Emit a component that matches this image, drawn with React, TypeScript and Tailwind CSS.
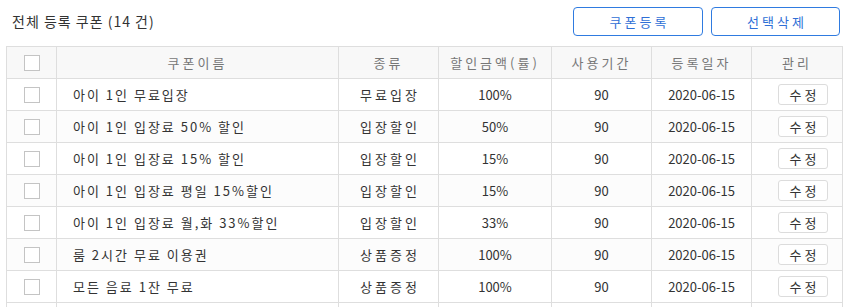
import React from 'react';

type Coupon = {
  name: string;
  kind: string;
  amount: string;
  days: number;
  date: string;
};

const coupons: Coupon[] = [
  { name: '아이 1인 무료입장', kind: '무료입장', amount: '100%', days: 90, date: '2020-06-15' },
  { name: '아이 1인 입장료 50% 할인', kind: '입장할인', amount: '50%', days: 90, date: '2020-06-15' },
  { name: '아이 1인 입장료 15% 할인', kind: '입장할인', amount: '15%', days: 90, date: '2020-06-15' },
  { name: '아이 1인 입장료 평일 15%할인', kind: '입장할인', amount: '15%', days: 90, date: '2020-06-15' },
  { name: '아이 1인 입장료 월,화 33%할인', kind: '입장할인', amount: '33%', days: 90, date: '2020-06-15' },
  { name: '룸 2시간 무료 이용권', kind: '상품증정', amount: '100%', days: 90, date: '2020-06-15' },
  { name: '모든 음료 1잔 무료', kind: '상품증정', amount: '100%', days: 90, date: '2020-06-15' },
];

function Checkbox() {
  return <span className="mx-auto block h-4 w-4 border border-[#c4c4c4] bg-white" />;
}

const th = 'h-8 border border-[#dedede] p-0 text-center font-normal text-[13px] tracking-[3px] text-[#777]';
const td = 'h-8 border border-[#dedede] p-0 text-center text-[13px] text-[#333]';

export default function App() {
  return (
    <div
      className="bg-white px-[6px]"
      style={{ fontFamily: '"Noto Sans CJK KR", "Noto Sans", sans-serif' }}
    >
      <div className="flex h-[43px] items-center justify-between">
        <h2 className="pl-[6px] text-[14px] font-normal tracking-[1px] text-[#333]">전체 등록 쿠폰 (14 건)</h2>
        <div className="mr-[2px] flex gap-[8px]">
          <button className="h-[29px] w-[130px] rounded-[4px] border border-[#2f7be0] bg-white pl-[3px] text-[13px] tracking-[3px] text-[#2f6fd6]">
            쿠폰등록
          </button>
          <button className="h-[29px] w-[129px] rounded-[4px] border border-[#2f7be0] bg-white pl-[3px] text-[13px] tracking-[3px] text-[#2f6fd6]">
            선택삭제
          </button>
        </div>
      </div>
      <table className="mt-[3px] w-[836px] table-fixed border-collapse">
        <colgroup>
          <col className="w-[50px]" />
          <col className="w-[282px]" />
          <col className="w-[100px]" />
          <col className="w-[113px]" />
          <col className="w-[100px]" />
          <col className="w-[100px]" />
          <col className="w-[91px]" />
        </colgroup>
        <thead>
          <tr className="bg-[#f8f8f8]">
            <th className={th}>
              <Checkbox />
            </th>
            <th className={th}>쿠폰이름</th>
            <th className={th}>종류</th>
            <th className={`${th} tracking-[1px]`}>할인금액(률)</th>
            <th className={th}>사용기간</th>
            <th className={th}>등록일자</th>
            <th className={th}>관리</th>
          </tr>
        </thead>
        <tbody>
          {coupons.map((c, i) => (
            <tr key={i} className={i % 2 === 1 ? 'bg-[#fcfcfc]' : 'bg-white'}>
              <td className={td}>
                <Checkbox />
              </td>
              <td className={`${td} pl-4 text-left tracking-[2px]`}>{c.name}</td>
              <td className={`${td} pl-[3px] tracking-[3px]`}>{c.kind}</td>
              <td className={td}>{c.amount}</td>
              <td className={td}>{c.days}</td>
              <td className={td}>{c.date}</td>
              <td className={`${td} pl-[12px]`}>
                <button className="h-[21px] w-[50px] rounded-[3px] border border-[#dcdcdc] bg-white pl-[3px] text-[13px] leading-none tracking-[3px] text-[#333]">
                  수정
                </button>
              </td>
            </tr>
          ))}
          <tr className="bg-white">
            {[0, 1, 2, 3, 4, 5, 6].map((k) => (
              <td key={k} className={td} />
            ))}
          </tr>
        </tbody>
      </table>
    </div>
  );
}
